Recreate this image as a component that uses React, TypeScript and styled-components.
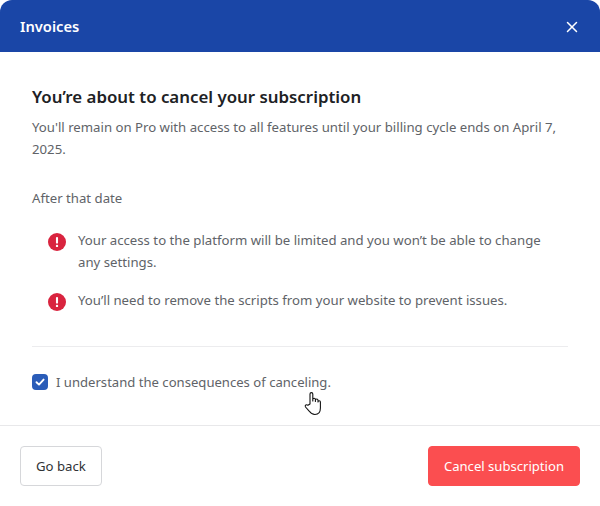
import styled, { createGlobalStyle } from "styled-components";
import { X } from "lucide-react";

const Global = createGlobalStyle`
  html, body { margin: 0; padding: 0; background: #fff; }
  body { font-family: "Noto Sans", "Open Sans", sans-serif; }
`;

const Dialog = styled.div`
  position: relative;
  width: 600px;
  height: 506px;
  background: #fff;
  border-radius: 12px;
  overflow: hidden;
  display: flex;
  flex-direction: column;
`;

const Header = styled.div`
  height: 52px;
  background: #1a46a7;
  display: flex;
  align-items: center;
  justify-content: space-between;
  padding: 0 20px;
  flex-shrink: 0;
`;

const Title = styled.div`
  color: #fff;
  font-size: 14.7px;
  font-weight: 600;
`;

const Close = styled.div`
  display: flex;
  color: #fff;
  margin-right: -1px;
  margin-top: 1px;
`;

const Body = styled.div`
  flex: 1;
  padding: 33px 32px 0;
`;

const Heading = styled.h2`
  margin: 0;
  font-size: 16.85px;
  line-height: 24px;
  font-weight: 600;
  color: #202124;
`;

const Text = styled.p`
  margin: 7px 0 0;
  font-size: 13.2px;
  line-height: 22px;
  color: #606368;
`;

const After = styled(Text)`
  margin-top: 27px;
`;

const List = styled.div`
  display: flex;
  flex-direction: column;
  gap: 16px;
  margin: 20px 0 0 16px;
`;

const Item = styled.div`
  display: flex;
  gap: 12px;
  font-size: 13.2px;
  line-height: 22px;
  color: #606368;
  padding-right: 20px;
`;

const AlertIcon = styled.svg`
  width: 18px;
  height: 18px;
  flex-shrink: 0;
  margin-top: 4px;
`;

const Divider = styled.div`
  height: 1px;
  background: #ececee;
  margin-top: 35px;
`;

const Consent = styled.label`
  display: flex;
  align-items: center;
  gap: 8px;
  margin-top: 24px;
  font-size: 13.1px;
  line-height: 22px;
  color: #606368;
`;

const Box = styled.span`
  width: 16px;
  height: 16px;
  border-radius: 4px;
  background: #2a5cb8;
  display: flex;
  align-items: center;
  justify-content: center;
`;

const Footer = styled.div`
  height: 80px;
  border-top: 1px solid #e8e8ea;
  display: flex;
  align-items: center;
  justify-content: space-between;
  padding: 0 20px;
  flex-shrink: 0;
`;

const Button = styled.button<{ $danger?: boolean }>`
  height: 40px;
  padding: 0 15px;
  border-radius: 4px;
  font-family: inherit;
  font-size: ${({ $danger }) => ($danger ? "13.1px" : "13.2px")};
  border: 1px solid ${({ $danger }) => ($danger ? "#fb4e50" : "#d6d7da")};
  background: ${({ $danger }) => ($danger ? "#fb4e50" : "#fff")};
  color: ${({ $danger }) => ($danger ? "#fff" : "#303236")};
`;

const Pointer = styled.svg`
  position: absolute;
  left: 304px;
  top: 391px;
  width: 20px;
  height: 26px;
`;

const Alert = () => (
  <AlertIcon viewBox="0 0 19 19">
    <circle cx="9.5" cy="9.5" r="9.5" fill="#d9243f" />
    <rect x="8.4" y="4.2" width="2.2" height="7" rx="1" fill="#fff" />
    <circle cx="9.5" cy="13.6" r="1.25" fill="#fff" />
  </AlertIcon>
);

export default function App() {
  return (
    <>
      <Global />
      <Dialog>
        <Header>
          <Title>Invoices</Title>
          <Close>
            <X size={18} strokeWidth={2} />
          </Close>
        </Header>
        <Body>
          <Heading>You’re about to cancel your subscription</Heading>
          <Text>
            You'll remain on Pro with access to all features until your billing cycle ends on April 7, 2025.
          </Text>
          <After>After that date</After>
          <List>
            <Item>
              <Alert />
              <span>Your access to the platform will be limited and you won’t be able to change any settings.</span>
            </Item>
            <Item>
              <Alert />
              <span>You’ll need to remove the scripts from your website to prevent issues.</span>
            </Item>
          </List>
          <Divider />
          <Consent>
            <Box>
              <svg width="12" height="12" viewBox="0 0 12 12" fill="none">
                <path d="M2.5 6.2 L5 8.6 L9.6 3.6" stroke="#fff" strokeWidth="1.9" strokeLinecap="round" strokeLinejoin="round" />
              </svg>
            </Box>
            I understand the consequences of canceling.
          </Consent>
        </Body>
        <Footer>
          <Button>Go back</Button>
          <Button $danger>Cancel subscription</Button>
        </Footer>
        <Pointer viewBox="0 0 20 26" fill="#fff" stroke="#111" strokeWidth="1.1" strokeLinejoin="round">
          <path d="M6 13 V3 a1.4 1.4 0 0 1 2.8 0 V10 V8.5 a1.3 1.3 0 0 1 2.6 0 V10.5 V9.3 a1.3 1.3 0 0 1 2.6 0 V11 a1.2 1.2 0 0 1 2.4 0 V17 c0 4 -2 6.5 -5.5 6.5 c-3 0 -4.2 -1.2 -5.5 -3.2 L1.5 16 c-1 -1.6 1 -3 2.4 -1.7 Z" />
        </Pointer>
      </Dialog>
    </>
  );
}
